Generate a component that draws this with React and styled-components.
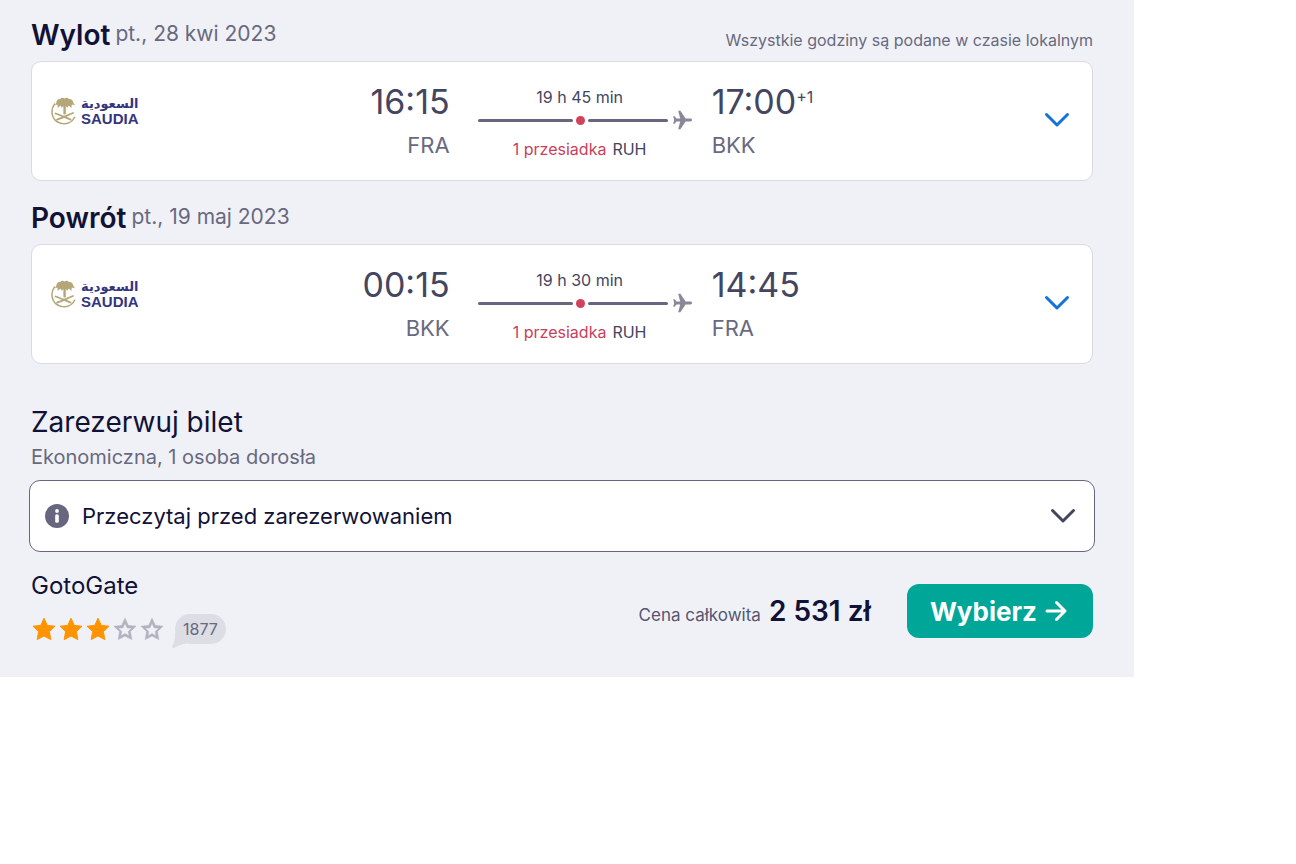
import React from "react";
import styled, { createGlobalStyle } from "styled-components";

const flights = [
  {
    title: "Wylot",
    date: "pt., 28 kwi 2023",
    note: "Wszystkie godziny są podane w czasie lokalnym",
    from: { time: "16:15", code: "FRA" },
    to: { time: "17:00", code: "BKK", offset: "+1" },
    duration: "19 h 45 min",
  },
  {
    title: "Powrót",
    date: "pt., 19 maj 2023",
    from: { time: "00:15", code: "BKK" },
    to: { time: "14:45", code: "FRA" },
    duration: "19 h 30 min",
  },
];

const STAR =
  "M12 1.2 L15.3 8.4 L23 9.2 L17.4 14.6 L18.8 22.6 L12 19 L5.2 22.6 L6.6 14.6 L1 9.2 L8.7 8.4 Z";
const STAR_HOLE =
  "M12 6 L14 10.7 L18.8 11.2 L15.3 14.4 L16.2 19 L12 16.6 L7.8 19 L8.7 14.4 L5.2 11.2 L10 10.7 Z";

const Chevron = () => (
  <svg width="26" height="16" viewBox="0 0 26 16" aria-hidden="true">
    <path
      d="M2.5 2.5 L13 13 L23.5 2.5"
      fill="none"
      stroke="currentColor"
      strokeWidth="3"
      strokeLinecap="round"
      strokeLinejoin="round"
    />
  </svg>
);

const Plane = () => (
  <svg width="19" height="20" viewBox="0 0 19 20" aria-hidden="true">
    <path
      fill="#8a8798"
      d="M5.2 0.8 H7.4 L12.6 8.6 H17.3 C18.4 8.6 19 9.2 19 10 C19 10.8 18.4 11.4 17.3 11.4 H12.6 L7.4 19.2 H5.2 L7.2 11.4 H3.4 L1.7 13.8 H0.2 L1.2 10 L0.2 6.2 H1.7 L3.4 8.6 H7.2 Z"
    />
  </svg>
);

const Emblem = () => (
  <svg width="26" height="28" viewBox="0 0 26 28" aria-hidden="true">
    <g fill="none" stroke="#b5a677" strokeLinecap="round">
      <path strokeWidth="1.5" d="M3.6 7 C-1.2 13 0.6 24 9.6 26.2 C15.4 27.6 21 25.6 23.6 20.4" />
      <path strokeWidth="1.8" d="M4.5 16.5 C9 18 14 20.4 19.6 22.6 M22 16 C16.4 18 11.4 21 6 22.6" />
      <path strokeWidth="2.4" d="M13.6 5 V16.4" />
    </g>
    <path
      fill="#b5a677"
      d="M13.6 1.4 C15.2 0.2 17 0.6 17.8 2 C20.4 1.6 22 3.4 22.2 5.4 L24 8.2 L20.8 7.6 L20.4 11 L17.8 8.4 L16.4 10.8 L13.6 8 L10.8 10.8 L9.4 8.4 L6.8 11 L6.4 7.6 L4 8.2 L5.4 5.4 C5.4 3.4 7 1.6 9.4 2 C10.2 0.6 12 0.2 13.6 1.4 Z"
    />
  </svg>
);

const Star = ({ full }) => (
  <svg width="24" height="24" viewBox="0 0 24 24" aria-hidden="true">
    <path
      d={full ? STAR : `${STAR} ${STAR_HOLE}`}
      fill={full ? "#ff9400" : "#b2b2bf"}
      stroke={full ? "#ff9400" : "#b2b2bf"}
      fillRule="evenodd"
      strokeWidth={full ? 1 : 0.6}
      strokeLinejoin="round"
    />
  </svg>
);

const Flight = ({ flight }) => (
  <section>
    <FlightHeader>
      <FlightHeading>
        <FlightTitle>{flight.title}</FlightTitle>
        <FlightDate>{flight.date}</FlightDate>
      </FlightHeading>
      {flight.note && <Note>{flight.note}</Note>}
    </FlightHeader>
    <Card>
      <Side>
        <Logo>
          <Emblem />
          <LogoText>
            <LogoArabic lang="ar">السعودية</LogoArabic>
            <LogoLatin>SAUDIA</LogoLatin>
          </LogoText>
        </Logo>
        <Stop $align="right">
          <Time>{flight.from.time}</Time>
          <Code>{flight.from.code}</Code>
        </Stop>
      </Side>
      <Route>
        <Duration>{flight.duration}</Duration>
        <RouteLine>
          <Segment $grow={95} />
          <Dot />
          <Segment $grow={80} />
          <PlaneBox>
            <Plane />
          </PlaneBox>
        </RouteLine>
        <Transfers>
          <TransferCount>1 przesiadka</TransferCount>
          <span>RUH</span>
        </Transfers>
      </Route>
      <Side>
        <Stop>
          <Time>
            {flight.to.time}
            {flight.to.offset && <Offset>{flight.to.offset}</Offset>}
          </Time>
          <Code>{flight.to.code}</Code>
        </Stop>
        <Expand type="button" aria-label={`Szczegóły: ${flight.title}`}>
          <Chevron />
        </Expand>
      </Side>
    </Card>
  </section>
);

const App = () => {
  return (
    <>
      <GlobalStyle />
      <Panel>
        {flights.map((flight) => (
          <Flight key={flight.title} flight={flight} />
        ))}
        <BookingTitle>Zarezerwuj bilet</BookingTitle>
        <BookingInfo>Ekonomiczna, 1 osoba dorosła</BookingInfo>
        <Notice type="button">
          <svg width="24" height="24" viewBox="0 0 24 24" aria-hidden="true">
            <circle cx="12" cy="12" r="12" fill="#68667f" />
            <circle cx="12" cy="7" r="1.9" fill="#fff" />
            <rect x="10.2" y="10.2" width="3.6" height="8.6" rx="1.6" fill="#fff" />
          </svg>
          <NoticeText>Przeczytaj przed zarezerwowaniem</NoticeText>
          <Chevron />
        </Notice>
        <Offer>
          <div>
            <Agent>GotoGate</Agent>
            <Rating>
              {[1, 2, 3, 4, 5].map((n) => (
                <Star key={n} full={n <= 3} />
              ))}
              <Reviews>
                1877
                <Tail width="14" height="16" viewBox="0 0 14 16" aria-hidden="true">
                  <path
                    fill="#dddde5"
                    d="M3 0 C3 6 2.4 9 0.4 12.6 C-0.4 14.4 0.6 15.4 2.4 14.8 C6 13.6 7 11 14 11 V0 Z"
                  />
                </Tail>
              </Reviews>
            </Rating>
          </div>
          <Purchase>
            <PriceLine>
              <span>Cena całkowita</span>
              <Price>2 531 zł</Price>
            </PriceLine>
            <Select type="button">
              Wybierz
              <svg width="22" height="22" viewBox="0 0 22 22" aria-hidden="true">
                <path
                  d="M2 11 H19 M11.5 2.5 L20 11 L11.5 19.5"
                  fill="none"
                  stroke="currentColor"
                  strokeWidth="3"
                  strokeLinecap="round"
                  strokeLinejoin="round"
                />
              </svg>
            </Select>
          </Purchase>
        </Offer>
      </Panel>
    </>
  );
};

const GlobalStyle = createGlobalStyle`
  * {
    box-sizing: border-box;
  }

  body {
    margin: 0;
    background: #fff;
    color: #111236;
    font-family: Inter, "Liberation Sans", sans-serif;
  }

  button {
    font: inherit;
    cursor: pointer;
  }

  svg {
    display: block;
    flex: none;
  }
`;

const Panel = styled.main`
  width: 87.5%;
  padding: 16px 41px 33px 31px;
  background: #f0f1f7;
`;

const FlightHeader = styled.header`
  display: flex;
  justify-content: space-between;
  align-items: flex-end;
  height: 45px;
  padding-bottom: 9px;
`;

const FlightHeading = styled.div`
  display: flex;
  align-items: flex-end;
  gap: 5px;
`;

const FlightTitle = styled.h2`
  margin: 0;
  font-size: 28px;
  line-height: 34px;
  font-weight: 600;
`;

const FlightDate = styled.span`
  font-size: 21px;
  line-height: 36px;
  color: #68697f;
`;

const Note = styled.span`
  font-size: 16px;
  line-height: 24px;
  color: #68697f;
`;

const Card = styled.div`
  display: grid;
  grid-template-columns: 53fr 214px 47fr;
  align-items: center;
  height: 120px;
  margin-bottom: 18px;
  padding: 0 22px 0 19px;
  border: 1px solid #d9dae3;
  border-radius: 10px;
  background: #fff;
`;

const Side = styled.div`
  display: flex;
  justify-content: space-between;
  align-items: center;
`;

const Logo = styled.div`
  display: flex;
  align-items: center;
  gap: 4px;
  padding-bottom: 20px;
`;

const LogoText = styled.div`
  display: flex;
  flex-direction: column;
  color: #35357d;
  font-weight: 700;
`;

const LogoArabic = styled.span`
  font-family: "DejaVu Sans", sans-serif;
  font-size: 13px;
  line-height: 15px;
`;

const LogoLatin = styled.span`
  font-family: "Liberation Sans", sans-serif;
  font-size: 15px;
  line-height: 15px;
`;

const Stop = styled.div`
  text-align: ${(props) => props.$align || "left"};
  padding: ${(props) => (props.$align ? "2px 28px 0 0" : "2px 0 0 20px")};
`;

const Time = styled.div`
  display: flex;
  justify-content: inherit;
  font-size: 34px;
  line-height: 46px;
  color: #444560;
`;

const Offset = styled.sup`
  font-size: 16px;
  line-height: 36px;
`;

const Code = styled.div`
  font-size: 22px;
  line-height: 40px;
  color: #68697f;
`;

const Route = styled.div`
  display: flex;
  flex-direction: column;
  padding-top: 10px;
  font-size: 16px;
  color: #444560;
`;

const Duration = styled.div`
  padding-right: 10px;
  line-height: 24px;
  text-align: center;
`;

const Transfers = styled.div`
  display: flex;
  justify-content: center;
  gap: 6px;
  padding-right: 10px;
  line-height: 36px;
`;

const TransferCount = styled.span`
  color: #c83f5c;
`;

const RouteLine = styled.div`
  display: flex;
  align-items: center;
  gap: 3px;
  height: 22px;
`;

const Segment = styled.span`
  flex: ${(props) => props.$grow} 1 0;
  height: 3px;
  border-radius: 2px;
  background: #68667f;
`;

const Dot = styled.span`
  width: 9px;
  height: 9px;
  border-radius: 50%;
  background: #d1435b;
`;

const PlaneBox = styled.span`
  padding-left: 2px;
`;

const Expand = styled.button`
  padding: 0 0 2px;
  border: 0;
  background: none;
  color: #1473d6;
`;

const BookingTitle = styled.h2`
  margin: 38px 0 0;
  font-size: 28px;
  line-height: 40px;
  font-weight: 400;
`;

const BookingInfo = styled.p`
  margin: 0 0 8px;
  font-size: 20px;
  line-height: 30px;
  color: #68697f;
`;

const Notice = styled.button`
  display: flex;
  align-items: center;
  gap: 13px;
  width: calc(100% + 4px);
  height: 72px;
  margin: 0 -2px;
  padding: 0 18px 0 15px;
  border: 1px solid #68667f;
  border-radius: 11px;
  background: #fff;
  color: #444560;
`;

const NoticeText = styled.span`
  flex: 1;
  font-size: 22px;
  text-align: left;
  color: #111236;
`;

const Offer = styled.div`
  display: flex;
  justify-content: space-between;
  align-items: center;
  padding-top: 18px;
`;

const Agent = styled.div`
  font-size: 24px;
  line-height: 32px;
`;

const Rating = styled.div`
  display: flex;
  align-items: center;
  gap: 3px;
  padding: 12px 0 0 1px;
`;

const Reviews = styled.span`
  position: relative;
  isolation: isolate;
  margin-left: 8px;
  padding: 0 8px;
  border-radius: 15px;
  background: #dddde5;
  font-size: 16px;
  line-height: 30px;
  color: #68697f;
`;

const Tail = styled.svg`
  position: absolute;
  left: -3px;
  bottom: -5px;
  z-index: -1;
`;

const Purchase = styled.div`
  display: flex;
  align-items: center;
  gap: 36px;
  padding-top: 8px;
`;

const PriceLine = styled.div`
  display: flex;
  align-items: baseline;
  gap: 8px;
  font-size: 17px;
  color: #545671;
`;

const Price = styled.strong`
  font-size: 28px;
  font-weight: 600;
  color: #111236;
`;

const Select = styled.button`
  display: flex;
  align-items: center;
  gap: 8px;
  height: 54px;
  padding: 0 26px 0 23px;
  border: 0;
  border-radius: 12px;
  background: #00a698;
  color: #fff;
  font-size: 26px;
  font-weight: 700;
`;

export default App;
